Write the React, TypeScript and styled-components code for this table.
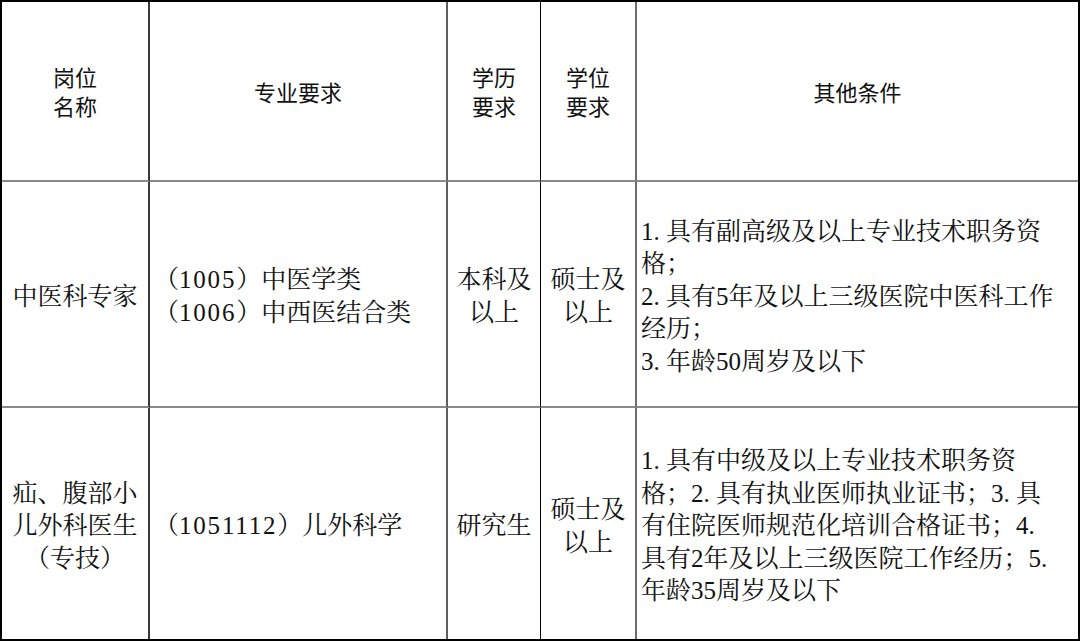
import React from "react";
import styled, { createGlobalStyle } from "styled-components";

const Global = createGlobalStyle`
  html, body { margin: 0; padding: 0; background: #fff; }
  body { width: 1080px; height: 641px; overflow: hidden; }
`;

const Table = styled.div`
  box-sizing: border-box;
  width: 1080px;
  height: 641px;
  display: grid;
  grid-template-columns: 148px 298px 93px 96px 1fr;
  grid-template-rows: 180px 226px 1fr;
  border: 2px solid #000;
  background: #fff;
  color: #111;
`;

type CellProps = {
  $col: number;
  $lastRow?: boolean;
  $left?: boolean;
  $head?: boolean;
};

const colLine: Record<number, string> = {
  0: "2px solid #3a3a3a",
  1: "2px solid #5e5e5e",
  2: "1.5px solid #000",
  3: "2px solid #6e6e6e",
  4: "none",
};

const Cell = styled.div<CellProps>`
  box-sizing: border-box;
  display: flex;
  flex-direction: column;
  justify-content: center;
  align-items: ${(p) => (p.$left ? "flex-start" : "center")};
  text-align: ${(p) => (p.$left ? "left" : "center")};
  padding: ${(p) => (p.$head ? "0" : "6px 0 0 0")};
  padding-left: ${(p) => (p.$left ? "4px" : "0")};
  border-right: ${(p) => colLine[p.$col]};
  border-bottom: ${(p) => (p.$lastRow ? "none" : "2px solid #8a8a8a")};
  font-family: ${(p) =>
    p.$head
      ? `"Noto Sans CJK SC", "Liberation Sans", sans-serif`
      : `"Liberation Serif", "Noto Serif CJK SC", "AR PL UMing CN", "Noto Sans CJK SC", serif`};
  font-size: ${(p) => (p.$head ? "22px" : "25px")};
  line-height: ${(p) => (p.$head ? "29px" : "32.6px")};
  white-space: nowrap;
  overflow: hidden;
`;

const Line = styled.span`
  display: block;
`;

const Code = styled.span`
  letter-spacing: 1.8px;
`;

type Row = {
  name: string[];
  major: [string, string][];
  edu: string[];
  degree: string[];
  other: string[];
};

const header = {
  name: ["岗位", "名称"],
  major: ["专业要求"],
  edu: ["学历", "要求"],
  degree: ["学位", "要求"],
  other: ["其他条件"],
};

const rows: Row[] = [
  {
    name: ["中医科专家"],
    major: [
      ["1005", "中医学类"],
      ["1006", "中西医结合类"],
    ],
    edu: ["本科及", "以上"],
    degree: ["硕士及", "以上"],
    other: [
      "1. 具有副高级及以上专业技术职务资",
      "格；",
      "2. 具有5年及以上三级医院中医科工作",
      "经历；",
      "3. 年龄50周岁及以下",
    ],
  },
  {
    name: ["疝、腹部小", "儿外科医生", "（专技）"],
    major: [["1051112", "儿外科学"]],
    edu: ["研究生"],
    degree: ["硕士及", "以上"],
    other: [
      "1. 具有中级及以上专业技术职务资",
      "格；2. 具有执业医师执业证书；3. 具",
      "有住院医师规范化培训合格证书；4.",
      "具有2年及以上三级医院工作经历；5.",
      "年龄35周岁及以下",
    ],
  },
];

const Lines: React.FC<{ items: string[] }> = ({ items }) => (
  <>
    {items.map((t, i) => (
      <Line key={i}>{t}</Line>
    ))}
  </>
);

export default function App() {
  return (
    <>
      <Global />
      <Table>
        <Cell $col={0} $head>
          <Lines items={header.name} />
        </Cell>
        <Cell $col={1} $head>
          <Lines items={header.major} />
        </Cell>
        <Cell $col={2} $head>
          <Lines items={header.edu} />
        </Cell>
        <Cell $col={3} $head>
          <Lines items={header.degree} />
        </Cell>
        <Cell $col={4} $head>
          <Lines items={header.other} />
        </Cell>
        {rows.map((r, i) => {
          const last = i === rows.length - 1;
          return (
            <React.Fragment key={i}>
              <Cell $col={0} $lastRow={last}>
                <Lines items={r.name} />
              </Cell>
              <Cell $col={1} $lastRow={last} $left>
                {r.major.map(([code, label], j) => (
                  <Line key={j}>
                    （<Code>{code}</Code>）{label}
                  </Line>
                ))}
              </Cell>
              <Cell $col={2} $lastRow={last}>
                <Lines items={r.edu} />
              </Cell>
              <Cell $col={3} $lastRow={last}>
                <Lines items={r.degree} />
              </Cell>
              <Cell $col={4} $lastRow={last} $left>
                <Lines items={r.other} />
              </Cell>
            </React.Fragment>
          );
        })}
      </Table>
    </>
  );
}
